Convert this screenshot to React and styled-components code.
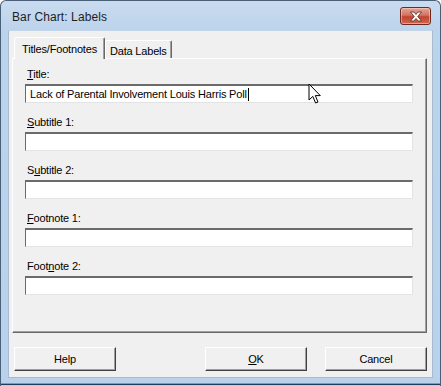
import React from "react";
import styled, { createGlobalStyle } from "styled-components";

const Global = createGlobalStyle`
	html, body {
		margin: 0;
		padding: 0;
		background: #ffffff;
	}
	* {
		box-sizing: border-box;
	}
`;

const Frame = styled.div`
	position: relative;
	width: 441px;
	height: 386px;
	overflow: hidden;
	display: flex;
	flex-direction: column;
	border: 1px solid #4a5f78;
	border-bottom: none;
	border-radius: 6px 6px 0 0;
	background: linear-gradient(to bottom, #c9dbef 0px, #bcd3ec 30px, #b9d1ea 100%);
	font-family: "Liberation Sans", Arial, sans-serif;
	font-size: 11px;
	letter-spacing: -0.18px;
	color: #000;
`;

const TitleBar = styled.div`
	height: 29px;
	flex: none;
	display: flex;
	align-items: center;
	justify-content: space-between;
	padding: 0 9px 0 11px;
`;

const Caption = styled.span`
	font-family: "Liberation Sans", Arial, sans-serif;
	font-size: 12px;
	letter-spacing: 0.1px;
	color: #1e1e1e;
	padding-top: 2px;
`;

const CloseButton = styled.div`
	width: 31px;
	height: 18px;
	margin-top: 1px;
	border: 1px solid #6e2a21;
	border-radius: 3px;
	background: linear-gradient(to bottom, #e7a595 0%, #d27463 45%, #c2432e 55%, #cf6a50 100%);
	box-shadow: inset 0 0 0 1px rgba(255, 220, 210, 0.5);
	display: flex;
	align-items: center;
	justify-content: center;
`;

const Client = styled.div`
	flex: none;
	height: 348px;
	margin: 0 7px;
	background: #f0f0f0;
	border: 1px solid #a7bbd0;
	border-top-color: #c2d4e8;
	display: flex;
	flex-direction: column;
	padding: 6px 5px 6px 3px;
`;

const TabStrip = styled.div`
	display: flex;
	align-items: flex-end;
	height: 21px;
	padding-left: 2px;
	position: relative;
	z-index: 1;
`;

const Tab = styled.div`
	height: ${p => (p.$active ? "22px" : "18px")};
	margin-bottom: ${p => (p.$active ? "-1px" : "0")};
	padding: 0 ${p => (p.$active ? "7px" : "4px")};
	display: flex;
	align-items: center;
	background: #f0f0f0;
	border-top: 1px solid #ffffff;
	border-left: 1px solid #ffffff;
	border-right: 1px solid #696969;
	box-shadow: inset -1px 0 0 #a0a0a0;
	border-radius: 2px 2px 0 0;
	padding-top: ${p => (p.$active ? "0" : "2px")};
`;

const Panel = styled.div`
	flex: 1;
	border-top: 1px solid #ffffff;
	border-left: 1px solid #ffffff;
	border-right: 1px solid #696969;
	border-bottom: 1px solid #696969;
	box-shadow: inset -1px -1px 0 #a0a0a0;
	padding: 8px 13px 0 12px;
	display: flex;
	flex-direction: column;
	gap: 12px;
`;

const Field = styled.div`
	display: flex;
	flex-direction: column;
	gap: 3px;
`;

const Label = styled.div`
	height: 14px;
	line-height: 14px;
	padding-left: 2px;
	color: #000;
`;

const Key = styled.span`
	text-decoration: underline;
	text-underline-offset: 1px;
`;

const Edit = styled.div`
	height: 19px;
	background: #ffffff;
	border-top: 2px solid #6a6a6a;
	border-left: 1px solid #6a6a6a;
	border-right: 1px solid #e3e3e3;
	border-bottom: 1px solid #e3e3e3;
	padding: 0 4px;
	display: flex;
	align-items: center;
	white-space: nowrap;
`;

const Caret = styled.span`
	display: inline-block;
	width: 1px;
	height: 13px;
	background: #000;
	margin-left: 1px;
`;

const ButtonRow = styled.div`
	flex: none;
	display: flex;
	align-items: center;
	padding: 13px 0 0 2px;
	height: 38px;
`;

const Button = styled.div`
	width: 102px;
	height: 24px;
	display: flex;
	align-items: center;
	justify-content: center;
	padding-top: 1px;
	background: #f0f0f0;
	border-top: 1px solid #ffffff;
	border-left: 1px solid #ffffff;
	border-right: 1px solid #404040;
	border-bottom: 1px solid #404040;
	box-shadow: inset -1px -1px 0 #a0a0a0;
	margin-left: ${p => p.$gap || 0}px;
`;

const Spacer = styled.div`
	flex: 1;
`;

const BottomEdge = styled.div`
	margin-top: 5px;
	height: 2px;
	background: #2cc0d0;
	border-bottom: 1px solid #1a3f60;
`;

const Pointer = styled.svg`
	position: absolute;
	left: 307px;
	top: 82px;
`;

const fields = [
	{ pre: "", key: "T", post: "itle:", value: "Lack of Parental Involvement Louis Harris Poll" },
	{ pre: "", key: "S", post: "ubtitle 1:" },
	{ pre: "S", key: "u", post: "btitle 2:" },
	{ pre: "", key: "F", post: "ootnote 1:" },
	{ pre: "Foot", key: "n", post: "ote 2:" },
];

const App = () => {
	return (
		<>
			<Global />
			<Frame>
				<TitleBar>
					<Caption>Bar Chart: Labels</Caption>
					<CloseButton>
						<svg width="14" height="11" viewBox="0 0 14 11">
							<path
								d="M1.5 1 L5 1 L7 3.5 L9 1 L12.5 1 L8.8 5.5 L12.5 10 L9 10 L7 7.5 L5 10 L1.5 10 L5.2 5.5 Z"
								fill="#ffffff"
								stroke="#5a2620"
								strokeWidth="0.8"
								strokeLinejoin="round"
							/>
						</svg>
					</CloseButton>
				</TitleBar>
				<Client>
					<TabStrip>
						<Tab $active>Titles/Footnotes</Tab>
						<Tab>Data Labels</Tab>
					</TabStrip>
					<Panel>
						{fields.map((f, i) => (
							<Field key={i}>
								<Label>
									{f.pre}
									<Key>{f.key}</Key>
									{f.post}
								</Label>
								<Edit>
									{f.value}
									{f.value && <Caret />}
								</Edit>
							</Field>
						))}
					</Panel>
					<ButtonRow>
						<Button>Help</Button>
						<Spacer />
						<Button>
							<Key>O</Key>K
						</Button>
						<Button $gap={18}>Cancel</Button>
					</ButtonRow>
				</Client>
				<BottomEdge />
				<Pointer width="14" height="22" viewBox="0 0 14 22">
					<path
						d="M1 1 L1 17 L4.8 13.4 L7.6 20 L10 19 L7.3 12.6 L12.3 12.6 Z"
						fill="#ffffff"
						stroke="#000000"
						strokeWidth="1"
						strokeLinejoin="miter"
					/>
				</Pointer>
			</Frame>
		</>
	);
};

export default App;
